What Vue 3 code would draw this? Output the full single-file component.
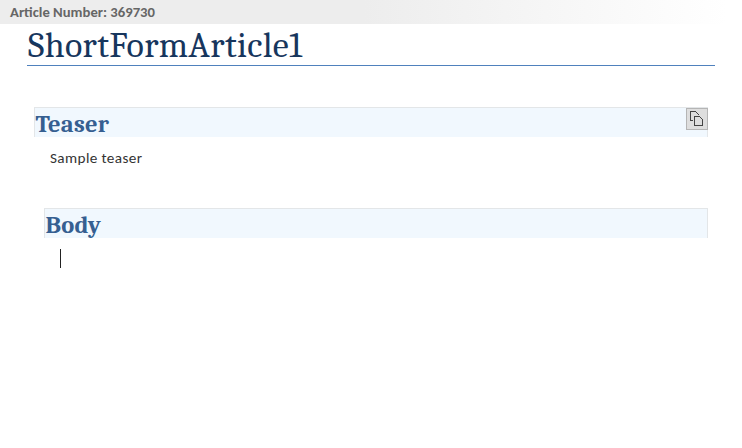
<script setup>
const articleNumber = '369730'
const title = 'ShortFormArticle1'
</script>

<template>
  <main class="page">
    <div class="bar">Article Number: {{ articleNumber }}</div>
    <h1 class="title"><span>{{ title }}</span></h1>
    <section class="section teaser">
      <header class="heading">
        <h2>Teaser</h2>
        <button class="copy" aria-label="Copy">
          <svg width="20" height="20" viewBox="0 0 20 20" fill="none" stroke="#444" shape-rendering="crispEdges">
            <path d="M6 11.5H3.5V2.5H8.5L12 6" />
            <path d="M7.5 7.5H12.5L15.5 10.5V16.5H7.5Z" />
          </svg>
        </button>
      </header>
      <p class="text">Sample teaser</p>
    </section>
    <section class="section body">
      <header class="heading"><h2>Body</h2></header>
      <div class="caret"></div>
    </section>
  </main>
</template>

<style>
body { background: #fff; }
</style>

<style scoped>
.page {
  height: 448px;
  overflow: hidden;
  font-family: Calibri, Carlito, "Open Sans", sans-serif;
}
.bar {
  height: 24px;
  box-sizing: border-box;
  padding-left: 10px;
  background: linear-gradient(to right, #ededed 0, #ededed 49%, #fff 98%);
  color: #666;
  font-size: 14.67px;
  font-weight: 700;
  line-height: 25px;
}
.title {
  height: 41px;
  margin: 0 27px;
  padding-left: 1px;
  border-bottom: 1px solid #4f81bd;
  color: #17365d;
  font-family: Cambria, Caladea, "DejaVu Serif Condensed", "DejaVu Serif", serif;
  font-size: 36px;
  font-weight: 400;
  letter-spacing: 0.35px;
  line-height: 43px;
  white-space: nowrap;
}
.section { margin-right: 34px; }
.teaser { margin-left: 34px; padding-top: 41px; }
.body { margin-left: 44px; padding-top: 40px; }
.heading {
  display: flex;
  justify-content: space-between;
  height: 30px;
  box-sizing: border-box;
  border: 1px solid #e3e6e8;
  border-bottom: 0;
  background: #f1f8fe;
}
h2 {
  margin: 0;
  padding-left: 0.5px;
  color: #365f91;
  font-family: Cambria, Caladea, "DejaVu Serif Condensed", "DejaVu Serif", serif;
  font-size: 24.5px;
  letter-spacing: 0.25px;
  line-height: 33px;
}
.copy {
  display: block;
  width: 22px;
  height: 22px;
  box-sizing: border-box;
  margin-right: -1px;
  padding: 0;
  border: 1px solid #b5b5b5;
  background: #dedede;
}
.copy svg { display: block; }
.text {
  height: 31px;
  margin: 0;
  padding-left: 16px;
  color: #333;
  font-size: 15.2px;
  letter-spacing: 0.38px;
  line-height: 43px;
}
.caret {
  width: 1px;
  height: 19px;
  margin: 11px 0 0 16px;
  background: #222;
}
</style>
